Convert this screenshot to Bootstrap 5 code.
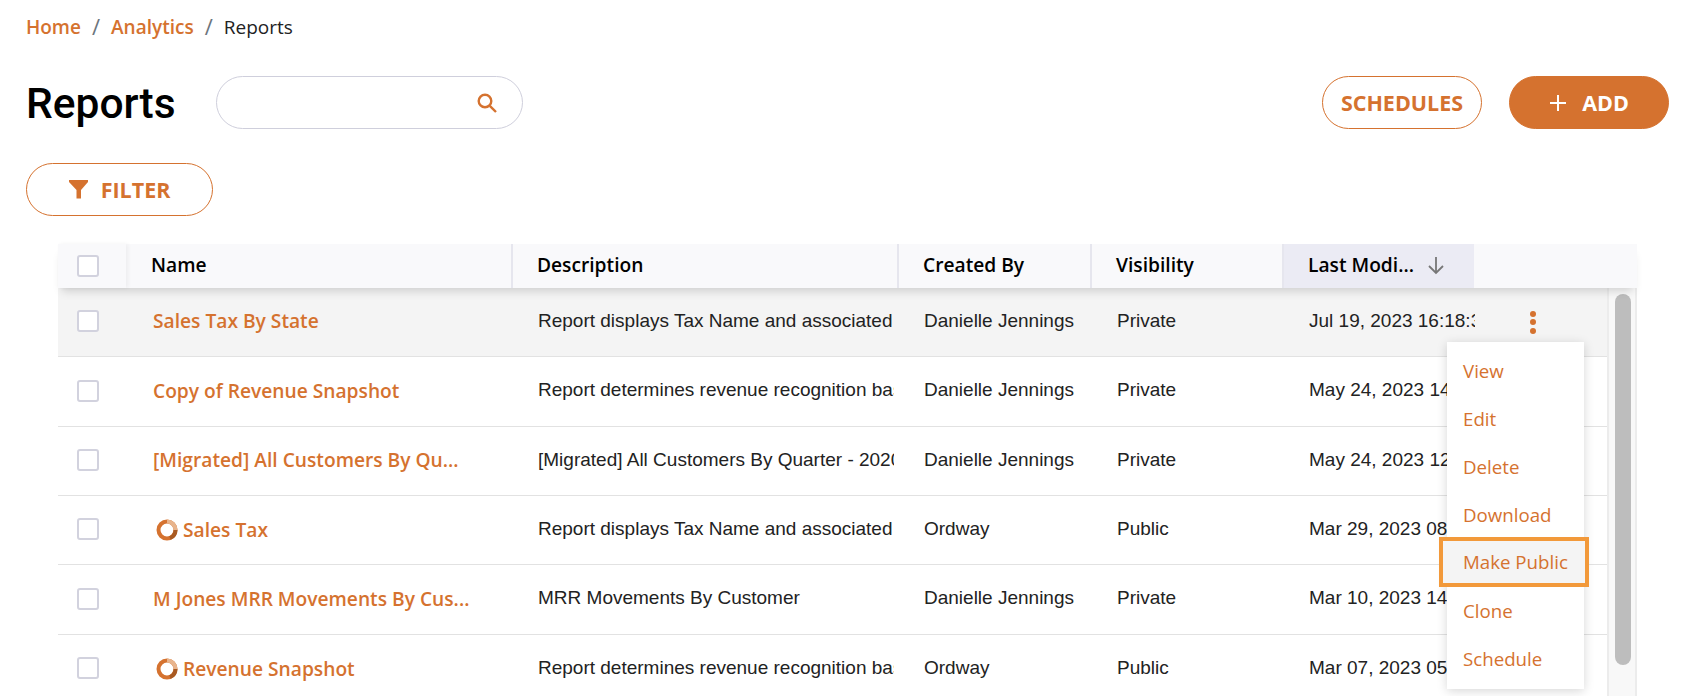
<!doctype html>
<html lang="en"><head><meta charset="utf-8"><title>Reports</title>
<link href="https://cdn.jsdelivr.net/npm/bootstrap@5.3.0/dist/css/bootstrap.min.css" rel="stylesheet">
<style>
html,body{height:696px;overflow:hidden}
body{font-family:"Open Sans",sans-serif;color:#000;background:#fff}
.pg{padding:15px 25px 0 26px}
.crumbs{margin:0;font-size:19px;font-weight:600;line-height:24px;--bs-breadcrumb-divider-color:#6c757d;--bs-breadcrumb-item-padding-x:11px}
.crumbs a{color:#d5722f;text-decoration:none}
.crumbs .breadcrumb-item+.breadcrumb-item::before{font-weight:400;font-size:22px;line-height:22px}
.crumbs .active{color:#222;font-weight:400}
.toprow{margin-top:37px;height:53px}
.ttl{font-family:Roboto,sans-serif;font-weight:500;font-size:42.500px;line-height:53px;margin:0;width:190px;padding-top:2px}
.srch{width:307px;height:53px;border:1px solid #cfcfdc;border-radius:27px;padding-right:23px}
.pillb{height:53px;border-radius:27px;border:1px solid #d5722f;color:#d5722f;background:#fff;font-weight:700;font-size:21.500px;line-height:1;padding:0;--bs-btn-hover-color:#d5722f}
.toprt{gap:27px}
.b-sched{width:160px}
.b-add{width:160px;background:#d5722f;color:#fff;gap:15px}
.b-filter{width:187px;margin-top:34px;gap:13px}
.tblw{margin:28px 0 0 32px;width:1579px}
.hd,.bd{table-layout:fixed;margin:0;border-collapse:separate;border-spacing:0}
.hd{width:1579px;position:relative;z-index:2;box-shadow:0 7px 9px -4px rgba(0,0,0,.16)}
.bd{width:1549px}
.hd th{background:#f9f9fb;height:44px;padding:0 0 2px 24px;font-size:19.200px;font-weight:600;color:#000;border:0;border-left:2px solid #e6e6ee;vertical-align:middle;line-height:1.2;box-shadow:none;white-space:nowrap}
.hd th.c0{border-left:0;padding:0 0 0 19px;position:relative;z-index:1;box-shadow:2px 0 4px rgba(0,0,0,.05)}
.hd th.c1{border-left:0;padding-left:25px}
.hd th.sorted{background:#ebebf4}
.hd th.c6{border-left:0}
.bd td{height:69px;padding:0;border:0;border-bottom:1px solid #e2e2e2;vertical-align:middle;font-family:"Liberation Sans",sans-serif;font-size:19px;color:#222;background:transparent;box-shadow:none;white-space:nowrap}
.bd tr.tl td{height:70px}
.bd tr.hov td{background:#f4f4f4}
.bd td.c0{padding:0 0 2px 19px}
.bd td.c1{padding-left:27px}
.bd td.ct{padding:0 0 2px 27px}
.clipt{overflow:hidden;white-space:nowrap}
.cd{width:356px}.cl{width:166px}
.nm{font-family:"Open Sans",sans-serif;font-weight:600;font-size:19.200px;color:#d5722f;text-decoration:none;white-space:nowrap;gap:5px}
.nm.d-inline-flex{vertical-align:middle}
.nm svg{margin-left:3px;flex:none}
.cbx{display:block;width:22px;height:22px;border:2px solid #d2d2de;border-radius:3px;background:#fff}
.trk{width:30px;flex:none;background:#f8f8f8;border-left:2px solid #ececec;border-right:2px solid #ececec;padding:6px 5px 0 6px;height:420px}
.thumb{height:371px;width:16px;background:#bdbdbd;border-radius:8px}
.bodyw{height:420px}
.kb{display:flex;flex-direction:column;gap:2.500px;margin-left:56px;width:6px}
.kb i{width:6px;height:6px;border-radius:50%;background:#d5722f;display:block}
.mnu{top:98px;left:1389px;width:137px;height:347px;padding:5px 0 0;border:0;border-radius:0;box-shadow:0 2px 10px rgba(0,0,0,.16);z-index:5;min-width:0}
.mnu .dropdown-item{height:48px;line-height:48px;padding:0 0 0 16px;font-size:18.700px;color:#d5722f}
.mnu .dropdown-item.mk{background:#f4f4f4;outline:4px solid #f2993a;outline-offset:0;position:relative;width:142px;margin-left:-4px;padding-left:20px;height:42px;line-height:42px;margin-top:2px;margin-bottom:4px;}
</style></head><body>
<div class="pg">
<nav><ol class="breadcrumb crumbs"><li class="breadcrumb-item"><a href="#">Home</a></li><li class="breadcrumb-item"><a href="#">Analytics</a></li><li class="breadcrumb-item active">Reports</li></ol></nav>
<div class="d-flex align-items-center toprow">
<h1 class="ttl">Reports</h1>
<div class="srch d-flex align-items-center justify-content-end"><svg width="24" height="24" viewBox="0 0 24 24" fill="none" stroke="#d5722f" stroke-width="2.400"><circle cx="10" cy="10" r="6.300"/><path d="M14.800 14.800 21 21"/></svg></div>
<div class="ms-auto d-flex toprt">
<button class="btn pillb b-sched">SCHEDULES</button>
<button class="btn pillb b-add d-flex align-items-center justify-content-center"><svg width="18" height="18" viewBox="0 0 18 18" stroke="#fff" stroke-width="2"><path d="M9 1v16M1 9h16"/></svg>ADD</button>
</div></div>
<button class="btn pillb b-filter d-flex align-items-center justify-content-center"><svg width="19" height="19" viewBox="0 0 19 19" fill="#d5722f"><path d="M0 0h19v2L12 10v8.500L7.500 18.500V10L0 2z"/></svg>FILTER</button>
<div class="tblw position-relative">
<table class="table hd"><colgroup><col style="width:68px"><col style="width:385px"><col style="width:386px"><col style="width:193px"><col style="width:192px"><col style="width:192px"><col></colgroup>
<thead><tr><th class="c0"><span class="cbx"></span></th><th class="c1">Name</th><th>Description</th><th>Created By</th><th>Visibility</th><th class="sorted"><span class="d-flex align-items-center gap-2">Last Modi...<svg class="ms-1" width="20" height="20" viewBox="0 0 20 20" fill="none" stroke="#777" stroke-width="1.800"><path d="M10 2v16M3 11l7 7 7-7"/></svg></span></th><th class="c6"></th></tr></thead></table>
<div class="d-flex align-items-start bodyw">
<table class="table bd"><colgroup><col style="width:68px"><col style="width:385px"><col style="width:386px"><col style="width:193px"><col style="width:192px"><col style="width:192px"><col></colgroup>
<tbody>
<tr class="hov"><td class="c0"><span class="cbx"></span></td><td class="c1"><a href="#" class="nm">Sales Tax By State</a></td><td class="ct"><div class="clipt cd">Report displays Tax Name and associated</div></td><td class="ct">Danielle Jennings</td><td class="ct">Private</td><td class="ct"><div class="clipt cl">Jul 19, 2023 16:18:32</div></td><td><span class="kb"><i></i><i></i><i></i></span></td></tr>
<tr class="tl"><td class="c0"><span class="cbx"></span></td><td class="c1"><a href="#" class="nm">Copy of Revenue Snapshot</a></td><td class="ct"><div class="clipt cd">Report determines revenue recognition based on</div></td><td class="ct">Danielle Jennings</td><td class="ct">Private</td><td class="ct"><div class="clipt cl">May 24, 2023 14:02:11</div></td><td></td></tr>
<tr><td class="c0"><span class="cbx"></span></td><td class="c1"><a href="#" class="nm">[Migrated] All Customers By Qu...</a></td><td class="ct"><div class="clipt cd">[Migrated] All Customers By Quarter - 2020</div></td><td class="ct">Danielle Jennings</td><td class="ct">Private</td><td class="ct"><div class="clipt cl">May 24, 2023 12:40:05</div></td><td></td></tr>
<tr><td class="c0"><span class="cbx"></span></td><td class="c1"><a href="#" class="nm d-inline-flex align-items-center"><svg width="22" height="22" viewBox="0 0 22 22" fill="none" stroke-width="4"><circle cx="11" cy="11" r="8.500" stroke="#d5722f"/><path d="M11 2.500A8.500 8.500 0 0 1 19.500 11" stroke="#e8b48c"/><path d="M19.500 11A8.500 8.500 0 0 1 14 19" stroke="#a85a22"/></svg>Sales Tax</a></td><td class="ct"><div class="clipt cd">Report displays Tax Name and associated</div></td><td class="ct">Ordway</td><td class="ct">Public</td><td class="ct"><div class="clipt cl">Mar 29, 2023 08:15:20</div></td><td></td></tr>
<tr class="tl"><td class="c0"><span class="cbx"></span></td><td class="c1"><a href="#" class="nm">M Jones MRR Movements By Cus...</a></td><td class="ct"><div class="clipt cd">MRR Movements By Customer</div></td><td class="ct">Danielle Jennings</td><td class="ct">Private</td><td class="ct"><div class="clipt cl">Mar 10, 2023 14:33:47</div></td><td></td></tr>
<tr><td class="c0"><span class="cbx"></span></td><td class="c1"><a href="#" class="nm d-inline-flex align-items-center"><svg width="22" height="22" viewBox="0 0 22 22" fill="none" stroke-width="4"><circle cx="11" cy="11" r="8.500" stroke="#d5722f"/><path d="M11 2.500A8.500 8.500 0 0 1 19.500 11" stroke="#e8b48c"/><path d="M19.500 11A8.500 8.500 0 0 1 14 19" stroke="#a85a22"/></svg>Revenue Snapshot</a></td><td class="ct"><div class="clipt cd">Report determines revenue recognition based on</div></td><td class="ct">Ordway</td><td class="ct">Public</td><td class="ct"><div class="clipt cl">Mar 07, 2023 05:10:09</div></td><td></td></tr>
</tbody></table>
<div class="trk"><div class="thumb"></div></div>
</div>
<div class="dropdown-menu show mnu">
<a class="dropdown-item" href="#">View</a><a class="dropdown-item" href="#">Edit</a><a class="dropdown-item" href="#">Delete</a><a class="dropdown-item" href="#">Download</a><a class="dropdown-item mk" href="#">Make Public</a><a class="dropdown-item" href="#">Clone</a><a class="dropdown-item" href="#">Schedule</a>
</div>
</div>
</div>
<script src="https://cdn.jsdelivr.net/npm/bootstrap@5.3.0/dist/js/bootstrap.bundle.min.js"></script>
</body></html>
